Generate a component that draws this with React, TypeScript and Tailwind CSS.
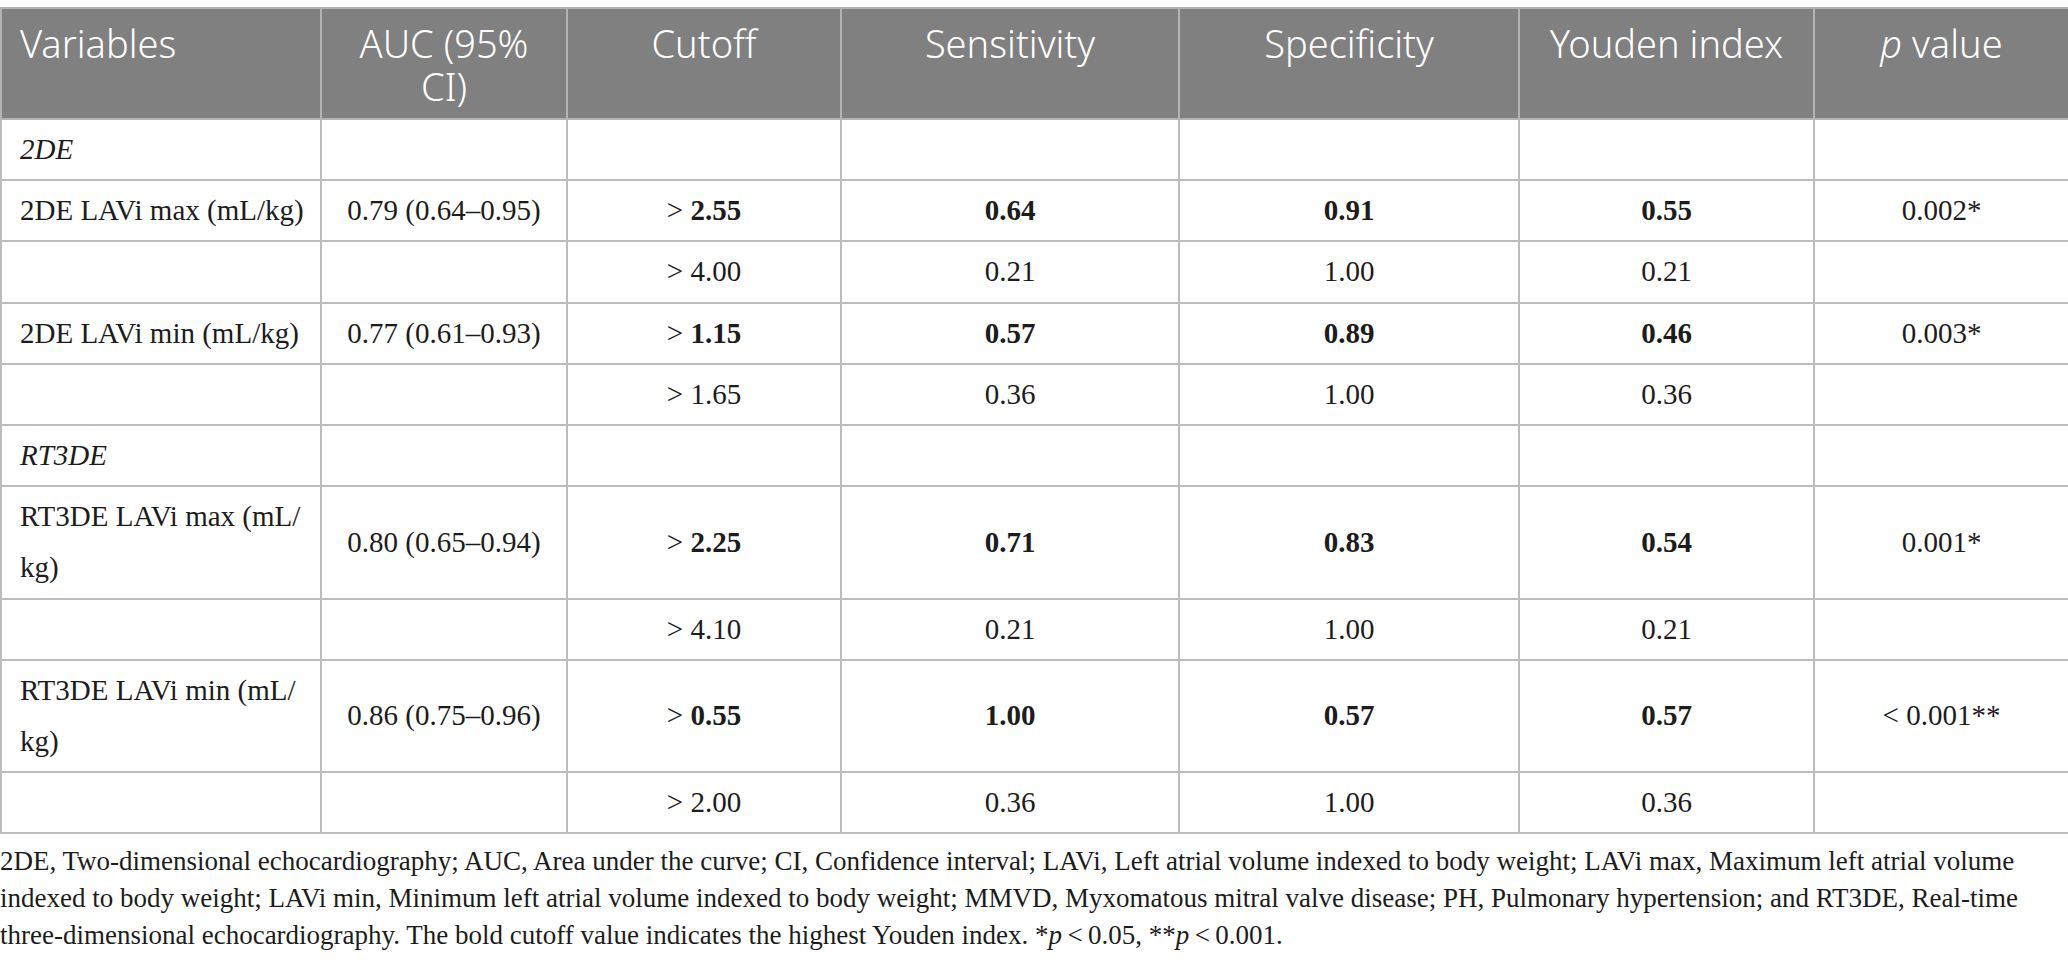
import React from 'react';

type Row = {
  variable?: React.ReactNode;
  auc?: string;
  cutoff?: string;
  sens?: string;
  spec?: string;
  youden?: string;
  p?: string;
  bold?: boolean;
  section?: string;
};

const rows: Row[] = [
  { section: '2DE' },
  { variable: '2DE LAVi max (mL/kg)', auc: '0.79 (0.64–0.95)', cutoff: '2.55', sens: '0.64', spec: '0.91', youden: '0.55', p: '0.002*', bold: true },
  { cutoff: '4.00', sens: '0.21', spec: '1.00', youden: '0.21' },
  { variable: '2DE LAVi min (mL/kg)', auc: '0.77 (0.61–0.93)', cutoff: '1.15', sens: '0.57', spec: '0.89', youden: '0.46', p: '0.003*', bold: true },
  { cutoff: '1.65', sens: '0.36', spec: '1.00', youden: '0.36' },
  { section: 'RT3DE' },
  {
    variable: (
      <>
        RT3DE LAVi max (mL/
        <br />
        kg)
      </>
    ),
    auc: '0.80 (0.65–0.94)', cutoff: '2.25', sens: '0.71', spec: '0.83', youden: '0.54', p: '0.001*', bold: true,
  },
  { cutoff: '4.10', sens: '0.21', spec: '1.00', youden: '0.21' },
  {
    variable: (
      <>
        RT3DE LAVi min (mL/
        <br />
        kg)
      </>
    ),
    auc: '0.86 (0.75–0.96)', cutoff: '0.55', sens: '1.00', spec: '0.57', youden: '0.57', p: '< 0.001**', bold: true,
  },
  { cutoff: '2.00', sens: '0.36', spec: '1.00', youden: '0.36' },
];

const th =
  'border-2 border-[#b3b3b3] px-[18px] pt-[13px] pb-[10px] align-top text-[38px] leading-[43px] font-light text-white';
const td = 'border-2 border-[#bdbdbd] px-[18px] py-[4px] leading-[51.2px] whitespace-nowrap';

export default function App() {
  return (
    <div className="min-h-screen bg-white pt-[7px] text-[#1c1c1c]">
      <table
        className="w-[2068px] table-fixed border-collapse"
        style={{ fontFamily: '"Liberation Serif", "Times New Roman", serif' }}
      >
        <colgroup>
          <col className="w-[320px]" />
          <col className="w-[246px]" />
          <col className="w-[274px]" />
          <col className="w-[338px]" />
          <col className="w-[340px]" />
          <col className="w-[295px]" />
          <col className="w-[255px]" />
        </colgroup>
        <thead className="bg-[#808080] font-['Noto_Sans',sans-serif]">
          <tr>
            <th className={`${th} text-left`}>Variables</th>
            <th className={`${th} text-center`}>
              <div>AUC (95%</div>
              <div>CI)</div>
            </th>
            <th className={`${th} text-center`}>Cutoff</th>
            <th className={`${th} text-center`}>Sensitivity</th>
            <th className={`${th} text-center`}>Specificity</th>
            <th className={`${th} text-center`}>Youden index</th>
            <th className={`${th} text-center`}>
              <i>p</i> value
            </th>
          </tr>
        </thead>
        <tbody className="text-[29px]">
          {rows.map((r, i) =>
            r.section ? (
              <tr key={i}>
                <td className={`${td} italic`}>{r.section}</td>
                <td className={td} />
                <td className={td} />
                <td className={td} />
                <td className={td} />
                <td className={td} />
                <td className={td} />
              </tr>
            ) : (
              <tr key={i}>
                <td className={`${td} text-left`}>{r.variable}</td>
                <td className={`${td} text-center`}>{r.auc}</td>
                <td className={`${td} text-center`}>
                  {'> '}
                  <span className={r.bold ? 'font-bold' : ''}>{r.cutoff}</span>
                </td>
                <td className={`${td} text-center ${r.bold ? 'font-bold' : ''}`}>{r.sens}</td>
                <td className={`${td} text-center ${r.bold ? 'font-bold' : ''}`}>{r.spec}</td>
                <td className={`${td} text-center ${r.bold ? 'font-bold' : ''}`}>{r.youden}</td>
                <td className={`${td} text-center`}>{r.p}</td>
              </tr>
            )
          )}
        </tbody>
      </table>

      <div
        className="mt-[9px] text-[27px] leading-[37px] whitespace-nowrap"
        style={{ fontFamily: '"Liberation Serif", "Times New Roman", serif' }}
      >
        <div>
          2DE, Two-dimensional echocardiography; AUC, Area under the curve; CI, Confidence interval; LAVi, Left atrial volume indexed to body weight; LAVi max, Maximum left atrial volume
        </div>
        <div>
          indexed to body weight; LAVi min, Minimum left atrial volume indexed to body weight; MMVD, Myxomatous mitral valve disease; PH, Pulmonary hypertension; and RT3DE, Real-time
        </div>
        <div>
          three-dimensional echocardiography. The bold cutoff value indicates the highest Youden index. *<i>p</i>&#8201;&lt;&#8201;0.05, **<i>p</i>&#8201;&lt;&#8201;0.001.
        </div>
      </div>
    </div>
  );
}
